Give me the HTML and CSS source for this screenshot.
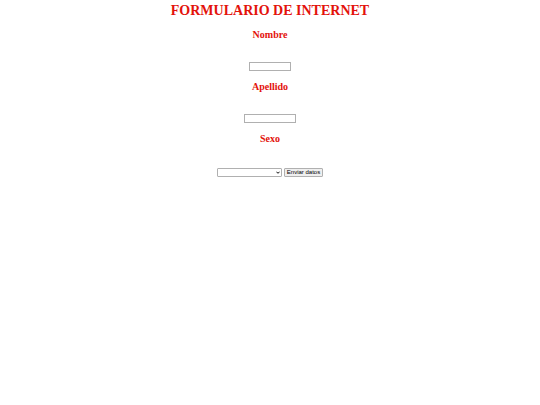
FILE: index.html
```html
<!DOCTYPE html>
<html lang="es">
	<head>
		<meta charset="UTF-8">
		<title>Formulario</title>
		<link rel="stylesheet" href="styles.css">
	</head>
	<body>
		<h1 class="titulo">FORMULARIO DE INTERNET</h1>
		<form class="formulario">
			<h2 class="etiqueta"><label for="nombre">Nombre</label></h2>
			<div class="fila">
				<input type="text" id="nombre" class="campo nombre" name="nombre">
			</div>
			<h2 class="etiqueta"><label for="apellido">Apellido</label></h2>
			<div class="fila">
				<input type="text" id="apellido" class="campo apellido" name="apellido">
			</div>
			<h2 class="etiqueta"><label for="sexo">Sexo</label></h2>
			<div class="fila envio">
				<div class="selector">
					<select id="sexo" class="lista" name="sexo">
						<option></option>
						<option>Hombre</option>
						<option>Mujer</option>
					</select>
					<svg class="flecha" viewBox="0 0 10 6" aria-hidden="true"><path d="M1 1 L5 5 L9 1" fill="none" stroke="#000" stroke-width="2.4"/></svg>
				</div>
				<button type="submit" class="enviar">Enviar datos</button>
			</div>
		</form>
	</body>
</html>
```

FILE: styles.css
```css
* {box-sizing: border-box;}
body {
	margin: 3px 8px;
	background: #fff;
	color: #e3120b;
	font-family: "Liberation Serif", "Times New Roman", serif;
	text-align: center;
}
.titulo {
	margin: 0 0 10px;
	font-size: 14px;
	line-height: 16px;
}
.etiqueta {
	margin: 0;
	font-size: 10px;
	line-height: 12px;
}
.fila {
	display: flex;
	justify-content: center;
	gap: 2px;
	margin: 21px 0 10px;
}
.envio {
	margin-top: 23px;
}
.campo, .lista, .enviar {
	display: block;
	height: 9px;
	margin: 0;
	padding: 0;
	border: 1px solid #b0b0b0;
	font-family: "Liberation Sans", Arial, sans-serif;
	font-size: 6px;
	line-height: 7px;
}
.nombre {
	width: 42px;
}
.apellido {
	width: 52px;
}
.selector {
	position: relative;
}
.lista {
	width: 65px;
	border-radius: 1px;
	background: #fff;
	appearance: none;
}
/* flecha encima de la lista */
.flecha {
	position: absolute;
	top: 3px;
	right: 2px;
	width: 4px;
	height: 3px;
	pointer-events: none;
}
.enviar {
	width: 39px;
	border-radius: 1px;
	background: #efefef;
	color: #000;
}
```
